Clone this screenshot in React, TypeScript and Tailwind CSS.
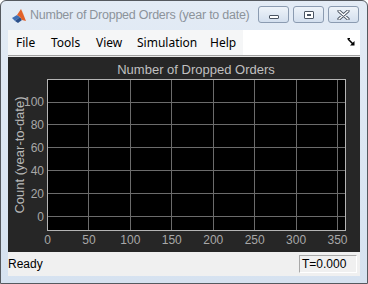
import React from "react";

const xTicks = [0, 50, 100, 150, 200, 250, 300, 350];
const yTicks = [0, 20, 40, 60, 80, 100];

// axes box inside the dark panel (panel-local pixels)
const AX = { left: 39, right: 337, top: 22, bottom: 173 };
const xPos = (v: number) => AX.left + (v / 50) * 41.43;
const yPos = (v: number) => 159 - (v / 20) * 22.9;

function MatlabIcon() {
  return (
    <svg width="16" height="16" viewBox="0 0 16 16">
      <polygon points="1,10 6,7 9,9 4,13" fill="#3f6fb5" />
      <polygon points="4,13 9,9 11,12 7,15" fill="#2a4f8a" />
      <polygon points="6,7 10,1 13,8 15,13 11,12 9,9" fill="#e2622b" />
      <polygon points="10,1 12,5 13,8" fill="#f29b38" />
    </svg>
  );
}

function WinButton({ children }: { children: React.ReactNode }) {
  return (
    <div className="flex h-[17px] w-[31px] items-center justify-center rounded-[3px] border border-[#8b9bb1] bg-gradient-to-b from-[#eef3f9] to-[#d3dfee]">
      {children}
    </div>
  );
}

function TitleBar() {
  return (
    <div className="flex h-[29px] items-center">
      <div className="ml-[3px] mt-[1px]">
        <MatlabIcon />
      </div>
      <span className="ml-[3px] text-[12.5px] tracking-[-0.25px] text-[#8c939b]">
        Number of Dropped Orders (year to date)
      </span>
      <div className="ml-auto mr-[1px] mt-[-2px] flex gap-[4px]">
        <WinButton>
          <div className="mt-[4px] h-[4px] w-[10px] rounded-[1px] border border-[#4b5563] bg-white" />
        </WinButton>
        <WinButton>
          <div className="flex h-[8px] w-[10px] items-center justify-center rounded-[1px] border border-[#4b5563] bg-white">
            <div className="h-[2px] w-[4px] bg-[#4b5563]" />
          </div>
        </WinButton>
        <WinButton>
          <svg width="13" height="10" viewBox="0 0 13 10">
            <path
              d="M2 1 L11 9 M11 1 L2 9"
              stroke="#4b5563"
              strokeWidth="3.2"
              strokeLinecap="round"
            />
            <path
              d="M2 1 L11 9 M11 1 L2 9"
              stroke="#ffffff"
              strokeWidth="1.4"
              strokeLinecap="round"
            />
          </svg>
        </WinButton>
      </div>
    </div>
  );
}

function MenuBar() {
  const items: [string, string][] = [
    ["File", "w-[35px]"],
    ["Tools", "w-[45px]"],
    ["View", "w-[41px]"],
    ["Simulation", "w-[73px]"],
    ["Help", "w-[33px]"],
  ];
  return (
    <div className="flex h-[25px] bg-white">
      <div className="flex items-center bg-[#f5f6f7] pl-[8px] font-['Noto_Sans',sans-serif] text-[12px] text-black">
        {items.map(([label, w]) => (
          <span key={label} className={w}>
            {label}
          </span>
        ))}
      </div>
      <div className="ml-auto mr-[4px] flex items-center">
        <svg width="9" height="9" viewBox="0 0 9 9">
          <path d="M1 1 L6 6" stroke="#000" strokeWidth="1.6" />
          <polygon points="7.5,3 7.5,7.5 3,7.5" fill="#000" />
          <path d="M0.5 0.5 L3 0.5" stroke="#000" strokeWidth="1" />
        </svg>
      </div>
    </div>
  );
}

function Plot() {
  return (
    <svg width="352" height="195" className="block font-['Liberation_Sans',Arial,sans-serif]">
      <rect x="0" y="0" width="352" height="195" fill="#262626" />
      <text x="188" y="17" textAnchor="middle" fontSize="13" fill="#c0c0c0">
        Number of Dropped Orders
      </text>
      <rect
        x={AX.left}
        y={AX.top}
        width={AX.right - AX.left}
        height={AX.bottom - AX.top}
        fill="#000"
      />
      {xTicks.map((t) => (
        <line
          key={`gx${t}`}
          x1={xPos(t) + 0.5}
          x2={xPos(t) + 0.5}
          y1={AX.top}
          y2={AX.bottom}
          stroke="#6b6b6b"
          strokeWidth="1"
          shapeRendering="crispEdges"
        />
      ))}
      {yTicks.map((t) => (
        <line
          key={`gy${t}`}
          x1={AX.left}
          x2={AX.right}
          y1={Math.round(yPos(t)) + 0.5}
          y2={Math.round(yPos(t)) + 0.5}
          stroke="#6b6b6b"
          strokeWidth="1"
          shapeRendering="crispEdges"
        />
      ))}
      <rect
        x={AX.left + 0.5}
        y={AX.top + 0.5}
        width={AX.right - AX.left}
        height={AX.bottom - AX.top}
        fill="none"
        stroke="#b4b4b4"
        strokeWidth="1"
        shapeRendering="crispEdges"
      />
      {yTicks.map((t) => (
        <text
          key={`ly${t}`}
          x="36"
          y={yPos(t) + 4.5}
          textAnchor="end"
          fontSize="12"
          fill="#a8a8a8"
        >
          {t}
        </text>
      ))}
      {xTicks.map((t) => (
        <text
          key={`lx${t}`}
          x={xPos(t) + 0.5}
          y="187"
          textAnchor="middle"
          fontSize="12"
          fill="#a8a8a8"
        >
          {t}
        </text>
      ))}
      <text
        x="0"
        y="0"
        transform="translate(16 98) rotate(-90)"
        textAnchor="middle"
        fontSize="13"
        fill="#b8b8b8"
      >
        Count (year-to-date)
      </text>
    </svg>
  );
}

function StatusBar() {
  return (
    <div className="flex h-[24px] items-center bg-[#f0f0f0] text-[12px] text-black">
      <span>Ready</span>
      <div className="ml-auto mr-[3px] flex h-[18px] w-[58px] items-center border border-[#a8a8a8] border-b-white border-r-white bg-[#f0f0f0] pl-[2px]">
        T=0.000
      </div>
    </div>
  );
}

export default function App() {
  return (
    <div className="flex h-[284px] w-[368px] flex-col overflow-hidden rounded-t-[6px] border border-[#55595f] bg-gradient-to-b from-[#e3ebf5] to-[#d6e2f0] px-[7px] pb-[7px] font-['Liberation_Sans',Arial,sans-serif]">
      <TitleBar />
      <div className="flex flex-1 flex-col">
        <MenuBar />
        <div className="h-[1px] bg-[#a0a0a0]" />
        <div className="h-[1px] bg-[#e8e8e8]" />
        <Plot />
        <StatusBar />
      </div>
    </div>
  );
}
